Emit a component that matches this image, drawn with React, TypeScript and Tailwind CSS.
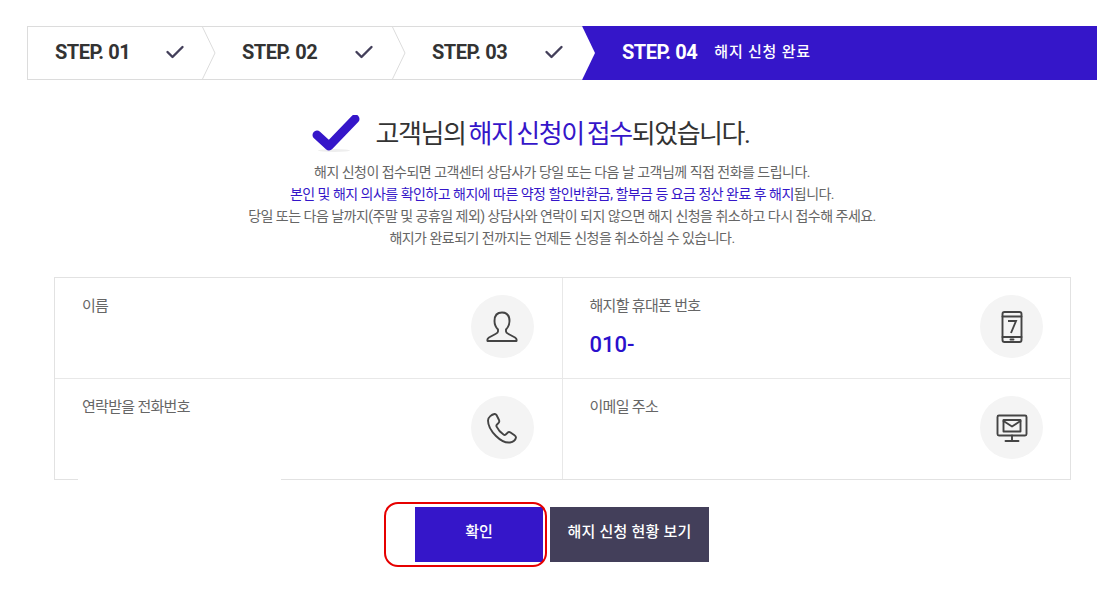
const PURPLE = "#3516c9";

function Check() {
  return (
    <svg width="20" height="16" viewBox="0 0 20 16" fill="none" className="mb-[1px] shrink-0">
      <path d="M2.5 8 L7.5 13 L17.5 3" stroke="#433f5a" strokeWidth="2.4" strokeLinecap="round" strokeLinejoin="round" />
    </svg>
  );
}

function Chevron() {
  return (
    <svg width="14" height="52" viewBox="0 0 14 52" fill="none" className="absolute right-[-13px] top-0 z-10">
      <path d="M0.5 0 L13 26 L0.5 52" stroke="#dcdcdc" strokeWidth="1" fill="#ffffff" />
    </svg>
  );
}

function Step({ label, widthClass }: { label: string; widthClass: string }) {
  return (
    <div className={`relative flex h-full items-center justify-between pb-[2px] ${widthClass}`}>
      <span className="text-[20px] font-bold tracking-[-0.45px] text-[#333]">{label}</span>
      <Check />
      <Chevron />
    </div>
  );
}

function Circle({ children }: { children: React.ReactNode }) {
  return (
    <div className="flex h-[63px] w-[63px] shrink-0 items-center justify-center rounded-full bg-[#f4f4f4]">
      {children}
    </div>
  );
}

function Cell({
  label,
  value,
  icon,
  className,
}: {
  label: string;
  value?: string;
  icon: React.ReactNode;
  className?: string;
}) {
  return (
    <div className={`flex items-start justify-between pl-[27px] pt-[17px] ${className ?? ""}`}>
      <div>
        <div className="text-[15px] leading-[22px] tracking-[-0.7px] text-[#666]">{label}</div>
        {value && <div className="mt-[14px] text-[22px] font-medium leading-[28px] text-[#2a10cc]">{value}</div>}
      </div>
      <Circle>{icon}</Circle>
    </div>
  );
}

const ICON = { stroke: "#444", strokeWidth: 1.9, fill: "none", strokeLinejoin: "round" as const, strokeLinecap: "round" as const };

export default function App() {
  return (
    <div
      className="relative h-[598px] w-[1115px] overflow-hidden bg-white pt-[26px]"
      style={{ fontFamily: 'Roboto, "Noto Sans CJK KR", "Liberation Sans", sans-serif' }}
    >
      {/* stepper */}
      <div className="ml-[27px] flex h-[54px] w-[1070px] items-stretch">
        <div className="flex flex-1 items-stretch border-y border-l border-[#dcdcdc]">
          <div className="flex h-full">
            <Step label="STEP. 01" widthClass="w-[175px] pl-[27px] pr-[18px]" />
            <Step label="STEP. 02" widthClass="w-[190px] pl-[39px] pr-[19px]" />
            <div className="relative flex h-full w-[189px] items-center justify-between pb-[2px] pl-[39px] pr-[18px]">
              <span className="text-[20px] font-bold tracking-[-0.45px] text-[#333]">STEP. 03</span>
              <Check />
            </div>
          </div>
        </div>
        <div className="relative flex h-full w-[515px] items-center bg-[#3516c9] pb-[2px] pl-[40px]">
          <svg width="14" height="54" viewBox="0 0 14 54" className="absolute left-0 top-0">
            <path d="M0 0 L13 27 L0 54 Z" fill="#ffffff" />
          </svg>
          <span className="text-[20px] font-bold tracking-[-0.45px] text-white">STEP. 04</span>
          <span className="ml-[17px] text-[15px] font-medium tracking-[0.8px] text-white">해지 신청 완료</span>
        </div>
      </div>

      {/* heading */}
      <div className="mt-[34px] flex h-[40px] items-center justify-center pr-[54px]">
        <svg width="48" height="38" viewBox="0 0 48 38" className="mr-[16px] shrink-0">
          <ellipse cx="22" cy="35.5" rx="16" ry="1.4" fill="#eeeeee" />
          <path d="M5 20 L17 31 L43 4" stroke={PURPLE} strokeWidth="9" strokeLinecap="round" strokeLinejoin="round" fill="none" />
        </svg>
        <h1 className="whitespace-nowrap text-[26px] font-normal leading-[40px] tracking-[-1.45px] text-[#333] [word-spacing:-2px]">
          고객님의 <span className="text-[#3516c9]">해지 신청이 접수</span>되었습니다.
        </h1>
      </div>

      {/* description */}
      <div className="mt-[7px] pl-[9px] text-center text-[14px] leading-[22px] tracking-[-0.52px] text-[#666]">
        <p>해지 신청이 접수되면 고객센터 상담사가 당일 또는 다음 날 고객님께 직접 전화를 드립니다.</p>
        <p>
          <span className="text-[#3516c9]">본인 및 해지 의사를 확인하고 해지에 따른 약정 할인반환금, 할부금 등 요금 정산 완료 후 해지</span>됩니다.
        </p>
        <p>당일 또는 다음 날까지(주말 및 공휴일 제외) 상담사와 연락이 되지 않으면 해지 신청을 취소하고 다시 접수해 주세요.</p>
        <p>해지가 완료되기 전까지는 언제든 신청을 취소하실 수 있습니다.</p>
      </div>

      {/* info grid */}
      <div className="relative ml-[54px] mt-[28px] grid w-[1017px] grid-cols-2 border border-[#e2e2e2]">
        <Cell
          label="이름"
          className="h-[101px] border-b border-r border-[#e8e8e8] pr-[28px]"
          icon={
            <svg width="34" height="34" viewBox="0 0 34 34" {...ICON}>
              <path d="M17 2.5 C11.5 2.5 9.5 6.5 9.5 11 C9.5 15 11.5 18 13 19.5 L13 21.5 C13 22.5 12 23.2 10.5 24 L4 27.5 C2.5 28.5 2.2 30 2.5 31 L31.5 31 C31.8 30 31.5 28.5 30 27.5 L23.5 24 C22 23.2 21 22.5 21 21.5 L21 19.5 C22.5 18 24.5 15 24.5 11 C24.5 6.5 22.5 2.5 17 2.5 Z" />
            </svg>
          }
        />
        <Cell
          label="해지할 휴대폰 번호"
          value="010-"
          className="h-[101px] border-b border-[#e8e8e8] pr-[27px]"
          icon={
            <svg width="24" height="34" viewBox="0 0 24 34" {...ICON}>
              <rect x="2.5" y="2" width="19" height="30" rx="2" />
              <path d="M2.5 6.5 H21.5 M2.5 27 H21.5 M10.5 29.5 H13.5" />
              <path d="M8 11 H16 L11 23" strokeLinecap="butt" strokeLinejoin="miter" />
            </svg>
          }
        />
        <Cell
          label="연락받을 전화번호"
          className="h-[100px] border-r border-[#e8e8e8] pr-[28px]"
          icon={
            <svg width="34" height="34" viewBox="0 0 34 34" {...ICON}>
              <path d="M9.5 3 C7 3.5 3 6 3 9.5 C3 15 7 21 11 25 C15 29 20 32 25 31.5 C28 31 30.5 29 31 26.5 C31 25.5 30.5 25 29.5 24.3 L25.5 21.5 C24.5 20.8 23.5 20.8 22.6 21.7 L20.7 23.5 C20 24.1 19.2 24 18.5 23.5 C15.5 21.5 13 18.5 11.6 15.6 C11.2 14.9 11.3 14.2 12 13.5 L13.6 11.8 C14.4 11 14.4 10 14 9 L11.5 4 C11 3.2 10.4 2.8 9.5 3 Z" />
            </svg>
          }
        />
        <Cell
          label="이메일 주소"
          className="h-[100px] pr-[27px]"
          icon={
            <svg width="34" height="34" viewBox="0 0 34 34" {...ICON}>
              <rect x="2.5" y="4.5" width="29" height="20" rx="1.5" />
              <rect x="8.5" y="9" width="17" height="11.5" />
              <path d="M8.5 10 L17 15.5 L25.5 10" />
              <path d="M17 24.5 V29.5 M10.5 30 H23.5" />
            </svg>
          }
        />
        <div className="absolute bottom-[-3px] left-[23px] h-[5px] w-[203px] bg-white" />
      </div>

      {/* buttons */}
      <div className="relative mt-[27px] flex h-[55px] justify-center gap-[7px] pl-[9px]">
        <button className="h-[55px] w-[128px] bg-[#3516c9] pb-[4px] text-[15px] font-medium text-white">확인</button>
        <button className="h-[55px] w-[159px] bg-[#433f5a] pb-[4px] text-[15px] font-medium tracking-[0.2px] text-white">
          해지 신청 현황 보기
        </button>
        <div className="absolute left-[384px] top-[-5px] h-[65px] w-[163px] rounded-[14px] border-2 border-[#e60000]" />
      </div>
    </div>
  );
}
